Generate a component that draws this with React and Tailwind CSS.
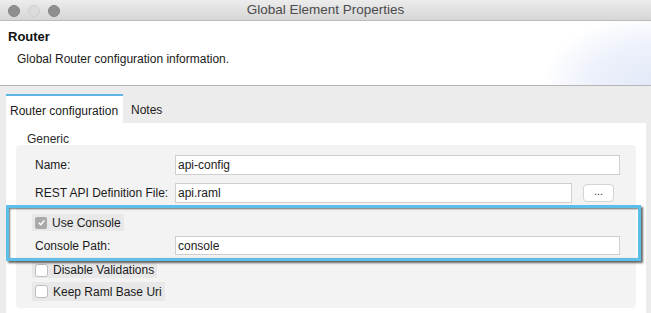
import React from "react";

const font = { fontFamily: '"Liberation Sans", Arial, sans-serif' };

function TrafficLight({ light }) {
  return (
    <span
      className={`inline-block w-[12px] h-[12px] rounded-full border ${
        light ? "bg-[#dcdcdc] border-[#cfcfcf]" : "bg-[#8f8f8f] border-[#858585]"
      }`}
    />
  );
}

function TextInput({ value, width }) {
  return (
    <div
      className={`${width} h-full bg-white border border-[#cfcfcf] flex items-center px-[2px] text-[12px] text-[#1b1b1b]`}>
      {value}
    </div>
  );
}

function Check({ checked, label, className }) {
  return (
    <div className={`flex items-center ${className}`}>
      <div className="flex items-center h-full ml-[16px] pl-[3px] pr-[3px] bg-[#e8e8e8]">
        {checked ? (
          <span className="w-[12px] h-[12px] rounded-[2px] bg-[#a9a9a9] flex items-center justify-center">
            <svg width="9" height="9" viewBox="0 0 10 10">
              <path d="M2 5.2 L4.2 7.4 L8.2 2.6" fill="none" stroke="#fff" strokeWidth="1.6" />
            </svg>
          </span>
        ) : (
          <span className="w-[13px] h-[13px] rounded-[3px] bg-white border border-[#bdbdbd]" />
        )}
        <span className="ml-[5px] text-[12px] text-[#1b1b1b]">{label}</span>
      </div>
    </div>
  );
}

export default function App() {
  return (
    <div className="w-[651px] h-[313px] overflow-hidden bg-[#ececec] text-[12px] text-[#1b1b1b]" style={font}>
      <div className="h-[21px] grid grid-cols-[1fr_auto_1fr] items-center bg-gradient-to-b from-[#ececec] to-[#d6d6d6] border-b border-[#bcbcbc]">
        <div className="flex items-center gap-[8px] pl-[8px] pt-[1px]">
          <TrafficLight />
          <TrafficLight light />
          <TrafficLight />
        </div>
        <div className="text-[13.5px] text-[#4b4b4b]">Global Element Properties</div>
        <div />
      </div>

      <div className="h-[65px] bg-white border-b border-[#b5b5b5] bg-[radial-gradient(ellipse_110px_70px_at_100%_100%,#e3e9f8_0%,#edf1fb_55%,transparent_100%)]">
        <div className="pl-[8px] pt-[6px] text-[13px] font-bold text-[#111]">Router</div>
        <div className="pl-[17px] pt-[3px] text-[12px] text-[#1b1b1b]">Global Router configuration information.</div>
      </div>

      <div className="flex items-end pt-[8px] pl-[6px] h-[37px]">
        <div className="h-[29px] w-[117px] bg-white border-t-2 border-[#5cb6e6] flex items-center pl-[4px] pt-[2px] text-[12px]">
          Router configuration
        </div>
        <div className="h-[29px] flex items-center pl-[8px] pt-[2px] text-[12px]">Notes</div>
      </div>

      <div className="ml-[6px] w-[640px] h-[190px] bg-white pt-[7px]">
        <div className="pl-[21px] h-[15px] text-[12px] text-[#2a2a2a]">Generic</div>
        <div className="ml-[10px] w-[620px] rounded-[4px] bg-[#f3f3f3] pt-[10px] pb-[7px]">
          <div className="flex items-center h-[20px]">
            <div className="pl-[19px] w-[159px] text-[12px]">Name:</div>
            <TextInput value="api-config" width="w-[445px]" />
          </div>
          <div className="flex items-center h-[20px] mt-[8px]">
            <div className="pl-[19px] w-[159px] text-[12px]">REST API Definition File:</div>
            <TextInput value="api.raml" width="w-[397px]" />
            <div className="ml-[11px] w-[31px] h-[18px] bg-white border border-[#d4d4d4] rounded-[4px] flex items-center justify-center text-[11px] leading-none pb-[3px] text-[#333]">
              ...
            </div>
          </div>

          <div className="relative mt-[11px]">
            <Check checked label="Use Console" className="h-[17px]" />
            <div className="flex items-center h-[19px] mt-[5px]">
              <div className="pl-[19px] w-[159px] text-[12px]">Console Path:</div>
              <TextInput value="console" width="w-[445px]" />
            </div>
            <div className="absolute -top-[9px] -bottom-[6px] -left-[10px] -right-[5px] border-[3px] border-[#5bbfea] shadow-[inset_1px_1px_2px_rgba(0,0,0,0.55),2px_2px_2px_rgba(0,0,0,0.6)]" />
          </div>

          <Check label="Disable Validations" className="h-[16px] mt-[7px]" />
          <Check label="Keep Raml Base Uri" className="h-[19px] mt-[4px]" />
        </div>
      </div>
    </div>
  );
}
